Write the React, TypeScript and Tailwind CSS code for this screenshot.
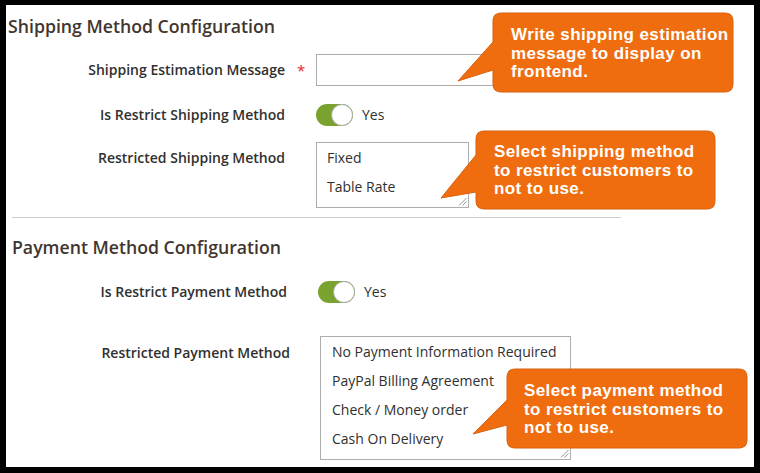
import React from "react";

const font = { fontFamily: '"Open Sans", "Liberation Sans", sans-serif' };

function Toggle() {
  return (
    <div className="relative w-[37px] h-[22px] rounded-full bg-[#79a22e] shrink-0">
      <div className="absolute right-0 top-0 w-[22px] h-[22px] rounded-full bg-white border border-[#adadad]" />
    </div>
  );
}

function Grip() {
  return (
    <svg className="absolute right-[1px] bottom-[1px]" width="9" height="9" viewBox="0 0 9 9">
      <line x1="1" y1="8.5" x2="8.5" y2="1" stroke="#8a8a8a" strokeWidth="0.9" />
      <line x1="4.5" y1="8.5" x2="8.5" y2="4.5" stroke="#8a8a8a" strokeWidth="0.9" />
    </svg>
  );
}

function calloutPath(bx0: number, by0: number, bx1: number, by1: number, ta: number, tb: number, tx: number, ty: number) {
  const r = 8;
  return `M ${bx0 + r} ${by0} H ${bx1 - r} Q ${bx1} ${by0} ${bx1} ${by0 + r} V ${by1 - r} Q ${bx1} ${by1} ${bx1 - r} ${by1} H ${bx0 + r} Q ${bx0} ${by1} ${bx0} ${by1 - r} V ${tb} L ${tx} ${ty} L ${bx0} ${ta} V ${by0 + r} Q ${bx0} ${by0} ${bx0 + r} ${by0} Z`;
}

const calloutText = "absolute text-white font-bold text-[17px] leading-[18.5px] tracking-[0.4px] whitespace-nowrap";
const calloutFont = { fontFamily: '"Liberation Sans", Arial, sans-serif' };

export default function App() {
  return (
    <div className="w-[760px] h-[473px] bg-black pt-[5px] pl-[6px] pr-[6px] pb-[6px] overflow-hidden" style={font}>
      <div className="relative w-[748px] h-[462px] bg-white text-[#303030]">
        <div className="pt-[9px] pl-[2px] text-[17.7px] leading-[24px] font-semibold text-[#41362f]">
          Shipping Method Configuration
        </div>

        <div className="flex items-center mt-[16px]">
          <div className="w-[279px] text-right text-[14px] leading-[20px] font-semibold">Shipping Estimation Message</div>
          <div className="w-[31px] pl-[12px] text-[#e22626] text-[15px] leading-[20px]">*</div>
          <div className="w-[260px] h-[32px] border border-[#adadad] bg-white" />
        </div>

        <div className="flex items-center mt-[18px]">
          <div className="w-[279px] text-right text-[14px] leading-[20px] font-semibold">Is Restrict Shipping Method</div>
          <div className="w-[31px]" />
          <Toggle />
          <div className="ml-[9px] text-[14px] leading-[20px]">Yes</div>
        </div>

        <div className="flex items-start mt-[16px]">
          <div className="w-[279px] pt-[6px] text-right text-[14px] leading-[20px] font-semibold">Restricted Shipping Method</div>
          <div className="w-[31px]" />
          <div className="relative w-[153px] h-[66px] border border-[#adadad] pl-[10px] text-[14px]">
            <div className="h-[29px] leading-[29px]">Fixed</div>
            <div className="h-[29px] leading-[29px]">Table Rate</div>
            <Grip />
          </div>
        </div>

        <div className="mt-[9px] ml-[6px] w-[609px] h-px bg-[#cccccc]" />

        <div className="mt-[17px] pl-[6px] text-[17.7px] leading-[24px] font-semibold text-[#41362f]">
          Payment Method Configuration
        </div>

        <div className="flex items-center mt-[22px]">
          <div className="w-[281px] text-right text-[14px] leading-[20px] font-semibold">Is Restrict Payment Method</div>
          <div className="w-[31px]" />
          <Toggle />
          <div className="ml-[9px] text-[14px] leading-[20px]">Yes</div>
        </div>

        <div className="flex items-start mt-[33px]">
          <div className="w-[284px] pt-[7px] text-right text-[14px] leading-[20px] font-semibold">Restricted Payment Method</div>
          <div className="w-[30px]" />
          <div className="relative w-[251px] h-[124px] border border-[#adadad] pl-[11px] text-[14px]">
            <div className="h-[29px] leading-[29px]">No Payment Information Required</div>
            <div className="h-[29px] leading-[29px]">PayPal Billing Agreement</div>
            <div className="h-[29px] leading-[29px]">Check / Money order</div>
            <div className="h-[29px] leading-[29px]">Cash On Delivery</div>
            <Grip />
          </div>
        </div>

        <svg className="absolute inset-0 pointer-events-none" width="748" height="462" viewBox="0 0 748 462">
          <path d={calloutPath(487, 8, 727, 87, 37, 65, 452, 76)} fill="#ef6d0f" stroke="#d8610c" strokeWidth="1" />
          <path d={calloutPath(470, 126, 709, 204, 150, 187, 435, 193)} fill="#ef6d0f" stroke="#d8610c" strokeWidth="1" />
          <path d={calloutPath(501, 364, 741, 443, 395, 420, 467, 429)} fill="#ef6d0f" stroke="#d8610c" strokeWidth="1" />
        </svg>

        <div className={calloutText} style={{ ...calloutFont, left: 505, top: 21 }}>
          <div>Write shipping estimation</div>
          <div>message to display on</div>
          <div>frontend.</div>
        </div>
        <div className={calloutText} style={{ ...calloutFont, left: 488, top: 138 }}>
          <div>Select shipping method</div>
          <div>to restrict customers to</div>
          <div>not to use.</div>
        </div>
        <div className={calloutText} style={{ ...calloutFont, left: 518, top: 377 }}>
          <div>Select payment method</div>
          <div>to restrict customers to</div>
          <div>not to use.</div>
        </div>
      </div>
    </div>
  );
}
